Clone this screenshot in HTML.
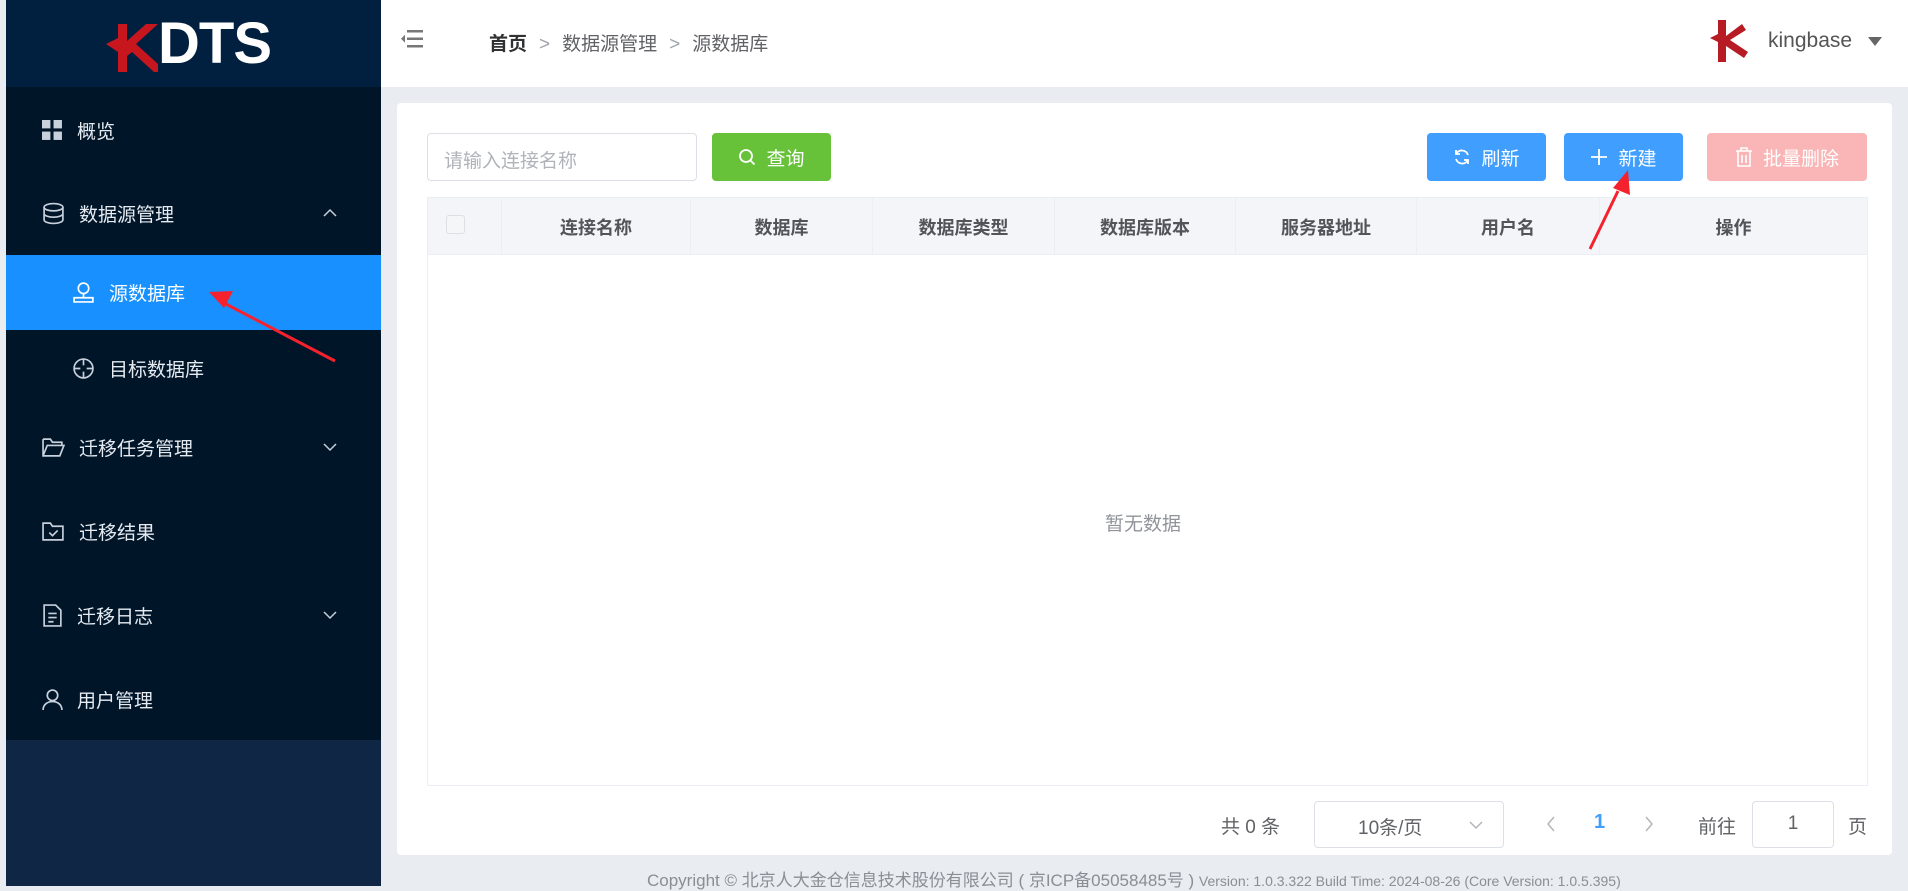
<!DOCTYPE html>
<html><head><meta charset="utf-8"><style>
*{box-sizing:border-box;margin:0;padding:0}
body{width:1908px;height:886px;overflow:hidden;background:#e9ecf0;font-family:"Liberation Sans","Noto Sans CJK SC",sans-serif;position:relative;color:#606266}
.abs{position:absolute}
#side{left:6px;top:0;width:375px;height:886px;background:#0f2645}
#logo{left:6px;top:0;width:375px;height:87px;background:#012040}
#menu{left:6px;top:87px;width:375px;height:653px;background:#001528}
.mi{position:absolute;left:6px;width:375px;height:84px;display:flex;align-items:center;color:#e6ebf2;font-size:19px}
.mi svg{margin-left:36px;margin-right:14px}
.sub svg{margin-left:66px}
.chev{position:absolute;right:30px}
#hdr{left:381px;top:0;width:1527px;height:87px;background:#fff}
.card{left:397px;top:103px;width:1495px;height:752px;background:#fff;border-radius:4px}
.btn{position:absolute;top:133px;height:48px;border-radius:4px;color:#fff;font-size:19px;display:flex;align-items:center;justify-content:center;gap:10px}
</style></head><body>
<div class="abs" id="side"></div>
<div class="abs" id="logo">
<svg class="abs" style="left:100px;top:24px" width="56" height="48" viewBox="0 0 56 48"><path d="M12 0h9v17L40 0h12L30 20l22 20v8h-4L26 28l-5 4v16h-9V28L0 20l12-6z" fill="#c8161e"/></svg>
<div class="abs" style="left:152px;top:14px;color:#fff;font-weight:bold;font-size:58px;letter-spacing:-1px;line-height:60px">DTS</div>
</div>
<div class="abs" id="menu"></div>
<div class="mi" style="top:88px"><svg width="21" height="21" viewBox="0 0 20 20" fill="#c8d0dc"><rect x="0" y="0" width="8" height="8"/><rect x="11" y="0" width="8" height="8"/><rect x="0" y="11" width="8" height="8"/><rect x="11" y="11" width="8" height="8"/></svg>概览</div>
<div class="mi" style="top:171px"><svg width="23" height="23" viewBox="0 0 22 22" fill="none" stroke="#c8d0dc" stroke-width="1.6"><ellipse cx="11" cy="5" rx="9" ry="3.5"/><path d="M2 5v12c0 2 4 3.5 9 3.5s9-1.5 9-3.5V5M2 11c0 2 4 3.5 9 3.5s9-1.5 9-3.5"/></svg>数据源管理<svg class="chev" width="14" height="10" viewBox="0 0 14 10"><path d="M1 8l6-6 6 6" stroke="#c8d0dc" fill="none" stroke-width="1.5"/></svg></div>
<div class="mi sub" style="top:255px;height:75px;background:#1890ff;color:#fff"><svg width="23" height="23" viewBox="0 0 22 22" fill="none" stroke="#fff" stroke-width="1.6"><circle cx="11" cy="7" r="5"/><path d="M11 12v4M2 16h18v4H2z"/></svg>源数据库</div>
<div class="mi sub" style="top:326px"><svg width="23" height="23" viewBox="0 0 22 22" fill="none" stroke="#c8d0dc" stroke-width="1.6"><circle cx="11" cy="11" r="9"/><path d="M11 2v6M11 14v6M2 11h6M14 11h6"/></svg>目标数据库</div>
<div class="mi" style="top:405px"><svg width="23" height="21" viewBox="0 0 22 20" fill="none" stroke="#c8d0dc" stroke-width="1.6"><path d="M1 2h7l2 3h9v3M1 2v16h16l4-10H5L1 18"/></svg>迁移任务管理<svg class="chev" width="14" height="10" viewBox="0 0 14 10"><path d="M1 2l6 6 6-6" stroke="#c8d0dc" fill="none" stroke-width="1.5"/></svg></div>
<div class="mi" style="top:489px"><svg width="23" height="21" viewBox="0 0 22 20" fill="none" stroke="#c8d0dc" stroke-width="1.6"><path d="M1 2h7l2 3h10v13H1z"/><path d="M7 11l3 3 5-5"/></svg>迁移结果</div>
<div class="mi" style="top:573px"><svg width="21" height="23" viewBox="0 0 20 22" fill="none" stroke="#c8d0dc" stroke-width="1.6"><path d="M2 1h11l5 5v15H2zM6 9h8M6 13h8M6 17h5"/></svg>迁移日志<svg class="chev" width="14" height="10" viewBox="0 0 14 10"><path d="M1 2l6 6 6-6" stroke="#c8d0dc" fill="none" stroke-width="1.5"/></svg></div>
<div class="mi" style="top:657px"><svg width="21" height="23" viewBox="0 0 20 22" fill="none" stroke="#c8d0dc" stroke-width="1.6"><circle cx="10" cy="7" r="5"/><path d="M1 21c0-5 4-8 9-8s9 3 9 8"/></svg>用户管理</div>
<div class="abs" id="hdr">
<svg class="abs" style="left:20px;top:30px" width="22" height="18" viewBox="0 0 22 18" fill="#777"><rect x="6" y="0" width="16" height="2.5"/><rect x="6" y="7.5" width="16" height="2.5"/><rect x="6" y="15" width="16" height="2.5"/><path d="M0 8.7l4-4v8z"/></svg>
<div class="abs" style="left:108px;top:29px;font-size:19px;color:#303133"><b>首页</b><span style="color:#a0a4ab;margin:0 12px">&gt;</span><span style="color:#606266">数据源管理</span><span style="color:#a0a4ab;margin:0 12px">&gt;</span><span style="color:#606266">源数据库</span></div>
<svg class="abs" style="left:1327px;top:20px" width="42" height="42" viewBox="0 0 42 42"><path d="M10 0h8v16L34 4l4 6-16 10 18 12-4 6-18-12v18h-8V22L2 18l8-4z" fill="#b71c24"/></svg>
<div class="abs" style="left:1387px;top:29px;font-size:21px;color:#555">kingbase</div>
<svg class="abs" style="left:1487px;top:37px" width="14" height="9"><path d="M0 0h14L7 9z" fill="#666"/></svg>
</div>
<div class="abs card"></div>
<div class="abs" style="left:427px;top:133px;width:270px;height:48px;border:1px solid #dcdfe6;border-radius:4px;font-size:19px;color:#b0b3b8;padding:12px 16px">请输入连接名称</div>
<div class="btn" style="left:712px;width:119px;background:#67c23a"><svg width="18" height="18" viewBox="0 0 18 18" fill="none" stroke="#fff" stroke-width="1.8"><circle cx="8" cy="8" r="6"/><path d="M12.5 12.5l4 4"/></svg>查询</div>
<div class="btn" style="left:1427px;width:119px;background:#409eff"><svg width="18" height="18" viewBox="0 0 18 18" fill="none" stroke="#fff" stroke-width="1.8"><path d="M15 7a6.5 6.5 0 0 0-12-1M3 11a6.5 6.5 0 0 0 12 1M3 2v4h4M15 16v-4h-4"/></svg>刷新</div>
<div class="btn" style="left:1564px;width:119px;background:#409eff"><svg width="18" height="18" viewBox="0 0 18 18" stroke="#fff" stroke-width="1.8"><path d="M9 1v16M1 9h16"/></svg>新建</div>
<div class="btn" style="left:1707px;width:160px;background:#fab6b6"><svg width="18" height="20" viewBox="0 0 18 20" fill="none" stroke="#fff" stroke-width="1.6"><path d="M1 4h16M6 4V1h6v3M3 4v15h12V4M7 8v8M11 8v8"/></svg>批量删除</div>
<div class="abs" style="left:427px;top:197px;width:1441px;height:589px;border:1px solid #ebeef5"></div>
<div class="abs" style="left:428px;top:198px;width:1439px;height:57px;background:#f3f5f9;border-bottom:1px solid #ebeef5"></div>
<div class="abs" style="left:446px;top:215px;width:19px;height:19px;border:1px solid #dcdfe6;border-radius:3px;background:#f5f6f8"></div>
<div style="font-size:18px;font-weight:bold;color:#515459">
<div class="abs" style="left:501px;top:198px;width:189px;height:57px;border-left:1px solid #ebeef5;display:flex;align-items:center;justify-content:center">连接名称</div>
<div class="abs" style="left:690px;top:198px;width:182px;height:57px;border-left:1px solid #ebeef5;display:flex;align-items:center;justify-content:center">数据库</div>
<div class="abs" style="left:872px;top:198px;width:182px;height:57px;border-left:1px solid #ebeef5;display:flex;align-items:center;justify-content:center">数据库类型</div>
<div class="abs" style="left:1054px;top:198px;width:181px;height:57px;border-left:1px solid #ebeef5;display:flex;align-items:center;justify-content:center">数据库版本</div>
<div class="abs" style="left:1235px;top:198px;width:181px;height:57px;border-left:1px solid #ebeef5;display:flex;align-items:center;justify-content:center">服务器地址</div>
<div class="abs" style="left:1416px;top:198px;width:183px;height:57px;border-left:1px solid #ebeef5;display:flex;align-items:center;justify-content:center">用户名</div>
<div class="abs" style="left:1599px;top:198px;width:268px;height:57px;border-left:1px solid #ebeef5;display:flex;align-items:center;justify-content:center">操作</div>
</div>
<div class="abs" style="left:1105px;top:509px;font-size:19px;color:#909399">暂无数据</div>
<div class="abs" style="left:1221px;top:812px;font-size:19px;color:#606266">共 0 条</div>
<div class="abs" style="left:1314px;top:801px;width:190px;height:47px;border:1px solid #dcdfe6;border-radius:4px;font-size:19px;color:#606266;padding:11px 0 0 43px">10条/页<svg class="abs" style="right:20px;top:19px" width="14" height="8"><path d="M1 1l6 6 6-6" stroke="#b0b3b8" fill="none" stroke-width="1.4"/></svg></div>
<svg class="abs" style="left:1546px;top:816px" width="10" height="16"><path d="M8 1L2 8l6 7" stroke="#b0b3b8" fill="none" stroke-width="1.4"/></svg>
<div class="abs" style="left:1594px;top:811px;font-size:20px;font-weight:bold;color:#409eff">1</div>
<svg class="abs" style="left:1644px;top:816px" width="10" height="16"><path d="M2 1l6 7-6 7" stroke="#b0b3b8" fill="none" stroke-width="1.4"/></svg>
<div class="abs" style="left:1698px;top:812px;font-size:19px">前往</div>
<div class="abs" style="left:1752px;top:801px;width:82px;height:47px;border:1px solid #dcdfe6;border-radius:4px;font-size:19px;text-align:center;padding-top:11px">1</div>
<div class="abs" style="left:1848px;top:812px;font-size:19px">页</div>
<div class="abs" style="left:647px;top:866px;font-size:17px;color:#8a8e95;white-space:nowrap">Copyright © 北京人大金仓信息技术股份有限公司 ( 京ICP备05058485号 ) <span style="font-size:14px">Version: 1.0.3.322 Build Time: 2024-08-26 (Core Version: 1.0.5.395)</span></div>
<svg class="abs" style="left:0;top:0" width="1908" height="886"><path d="M335 361L222 302" stroke="#f5222d" stroke-width="3"/><path d="M209 292l24-1-9 17z" fill="#f5222d"/><path d="M1590 249l28-58" stroke="#f5222d" stroke-width="3"/><path d="M1628 170l2 25-17-7z" fill="#f5222d"/></svg>
</body></html>
